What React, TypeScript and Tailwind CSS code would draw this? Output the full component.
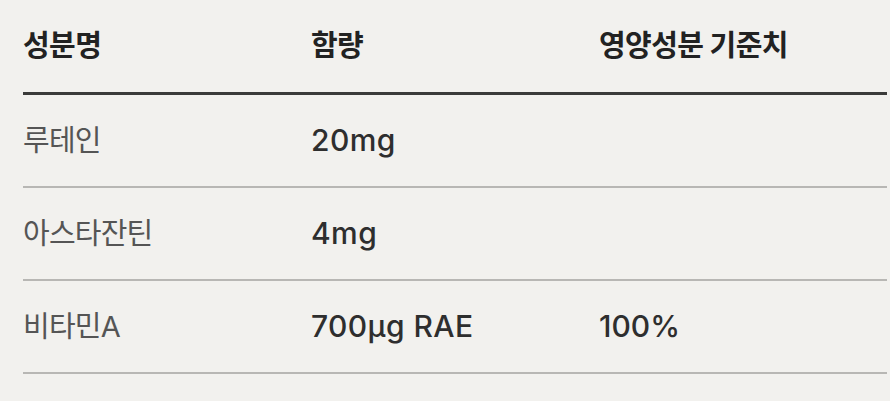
import React from "react";

const rows = [
  { name: "루테인", amount: "20mg", ratio: "" },
  { name: "아스타잔틴", amount: "4mg", ratio: "" },
  { name: "비타민A", amount: "700μg RAE", ratio: "100%" },
];

export default function App() {
  return (
    <div
      className="w-[890px] h-[401px] bg-[#f2f1ee] pl-[23px] pr-[3px] overflow-hidden"
      style={{ fontFamily: 'Inter, "Noto Sans CJK KR", "Noto Sans", sans-serif' }}
    >
      <div className="grid grid-cols-3 h-[95px] items-center border-b-[3px] border-[#3b3b3a] text-[29px] font-bold text-[#222] tracking-[-0.6px]">
        <div>성분명</div>
        <div>함량</div>
        <div>영양성분 기준치</div>
      </div>
      {rows.map((r) => (
        <div
          key={r.name}
          className="grid grid-cols-3 h-[93px] items-center border-b-2 border-[#b8b7b4] text-[30px]"
        >
          <div className="text-[#555] font-normal tracking-[-0.8px] text-[29px]">{r.name}</div>
          <div className="text-[#2e2e2e] font-medium tracking-[0.4px]">{r.amount}</div>
          <div className="text-[#2e2e2e] font-medium">{r.ratio}</div>
        </div>
      ))}
    </div>
  );
}
